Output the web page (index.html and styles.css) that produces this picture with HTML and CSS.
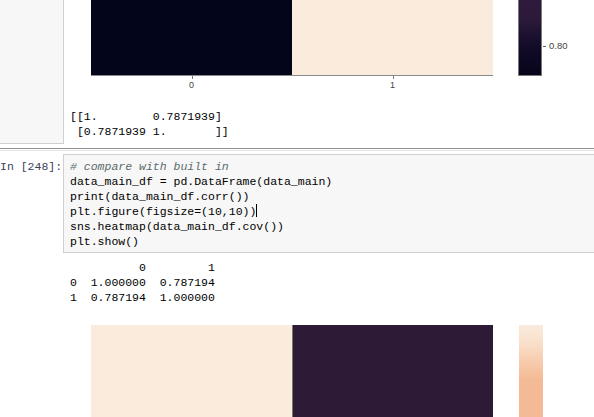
FILE: index.html
```html
<!DOCTYPE html>
<html>
<head>
<meta charset="utf-8">
<link rel="stylesheet" href="styles.css">
</head>
<body>
<div class="page">
  <div class="prev">
    <div class="prev-prompt"></div>
    <div class="out-area">
      <div class="figure">
        <div class="heat">
          <div class="cells"><div class="blk c-dark"></div><div class="blk c-light"></div></div>
          <div class="xticks"><span class="tick">0</span><span class="tick">1</span></div>
        </div>
        <div class="cbar cbar-top"><span class="cbar-tick">0.80</span></div>
      </div>
      <pre class="out-text first">[[1.        0.7871939]
 [0.7871939 1.       ]]</pre>
    </div>
  </div>
  <div class="sep"></div>
  <div class="cell">
    <div class="input">
      <div class="prompt">In&nbsp;[248]:</div>
      <div class="code"><span class="cm"># compare with built in</span>
data_main_df = pd.DataFrame(data_main)
print(data_main_df.corr())
plt.figure(figsize=(10,10))<span class="cursor"></span>
sns.heatmap(data_main_df.cov())
plt.show()</div>
    </div>
    <div class="out-area out2">
      <pre class="out-text">          0         1
0  1.000000  0.787194
1  0.787194  1.000000</pre>
      <div class="figure fig2">
        <div class="heat">
          <div class="cells cells2"><div class="blk c-light"></div><div class="blk c-plum"></div></div>
        </div>
        <div class="cbar cbar-bottom"></div>
      </div>
    </div>
  </div>
</div>
</body>
</html>
```
FILE: styles.css
```css
html, body {
  margin: 0;
  padding: 0;
  background: #fff;
}
body {
  width: 594px;
  height: 417px;
  overflow: hidden;
  font-family: "Liberation Mono", "DejaVu Sans Mono", monospace;
  color: #000;
}
.page {
  width: 594px;
}
.prev {
  display: flex;
  height: 144px;
}
.prev-prompt {
  box-sizing: border-box;
  width: 64px;
  height: 144px;
  background: #f7f7f7;
  border-right: 1px solid #cfcfcf;
  border-bottom: 1px solid #cfcfcf;
  flex: none;
}
.out-area {
  flex: 1;
  padding-left: 6px;
}
.figure {
  display: flex;
  align-items: flex-start;
  margin-left: 21px;
}
.heat {
  width: 402px;
  flex: none;
}
.cells {
  display: flex;
  height: 75px;
  border-bottom: 1px solid #8a8a8a;
}
.blk {
  flex: 1;
}
.c-dark { background: #03051a; }
.c-light { background: #faebdd; }
.c-plum { background: #2c1a36; border-left: 1px solid #777; }
.xticks {
  display: flex;
}
.tick {
  flex: 1;
  text-align: center;
  font-family: "Liberation Sans", Arial, sans-serif;
  font-size: 9px;
  line-height: 12px;
  color: #444;
  padding-top: 3px;
  position: relative;
}
.tick::before {
  content: "";
  position: absolute;
  left: 50%;
  top: 0;
  width: 1px;
  height: 3px;
  background: #777;
}
.cbar {
  position: relative;
  box-sizing: border-box;
  width: 24px;
  margin-left: 25px;
  flex: none;
}
.cbar-top {
  height: 76px;
  border: 1px solid #7a7a7a;
  border-top: none;
  background: linear-gradient(#2e1a3c 0, #2d1a3a 26%, #1f1332 42%, #120b27 65%, #06051b 100%);
}
.cbar-tick {
  position: absolute;
  left: 24px;
  top: 40px;
  font-family: "Liberation Sans", Arial, sans-serif;
  font-size: 9.5px;
  line-height: 12px;
  color: #444;
  padding-left: 6px;
  white-space: nowrap;
}
.cbar-tick::before {
  content: "";
  position: absolute;
  left: 0;
  top: 6px;
  width: 3px;
  height: 1px;
  background: #666;
}
.out-text {
  margin: 0;
  font-family: "Liberation Mono", "DejaVu Sans Mono", monospace;
  font-size: 11.5px;
  line-height: 15px;
  color: #000;
}
.out-text.first {
  margin-top: 18px;
}
.sep {
  margin-top: 4px;
  height: 1px;
  border-top: 1px solid #959595;
  border-bottom: 1px solid #e6e6e6;
}
.cell {
  margin-top: 3px;
}
.input {
  display: flex;
}
.prompt {
  box-sizing: border-box;
  width: 63px;
  flex: none;
  text-align: right;
  padding-right: 2px;
  padding-top: 5px;
  font-size: 11.5px;
  line-height: 15px;
  color: #3a3f5c;
  white-space: nowrap;
}
.code {
  flex: 1;
  margin-right: -20px;
  border: 1px solid #cfcfcf;
  background: #f7f7f7;
  padding: 4px 6px 3px;
  font-size: 11.5px;
  line-height: 15px;
  white-space: pre;
}
.cm {
  color: #5a6b6b;
  font-style: italic;
}
.cursor {
  display: inline-block;
  width: 1px;
  height: 13px;
  background: #000;
  vertical-align: -2px;
}
.out2 {
  margin-left: 64px;
  padding-left: 6px;
}
.out2 .out-text {
  margin-top: 7px;
}
.fig2 {
  margin-top: 20px;
  margin-left: 21px;
}
.cells2 {
  height: 92px;
  border-bottom: none;
}
.cbar-bottom {
  height: 92px;
  margin-left: 26px;
  background: linear-gradient(#faebdd 0, #f9dfca 20%, #f6c7a6 45%, #f4b995 60%, #f4b995 100%);
}
```
